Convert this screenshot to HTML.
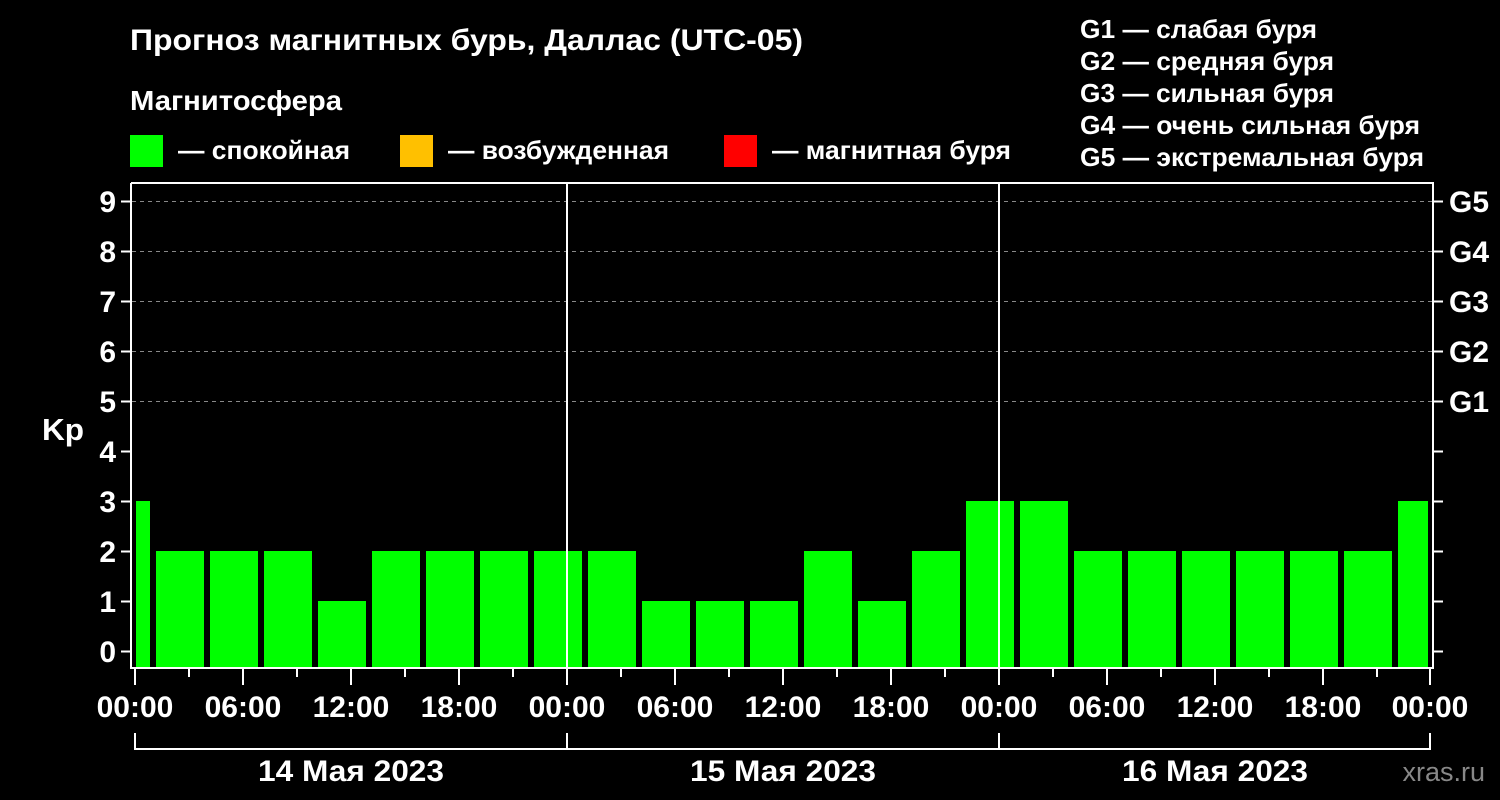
<!DOCTYPE html>
<html><head><meta charset="utf-8"><style>
html,body{margin:0;padding:0;background:#000;}
svg{display:block;font-family:"Liberation Sans",Arial,sans-serif;font-weight:bold;}
</style></head><body>
<svg width="1500" height="800" viewBox="0 0 1500 800" xmlns="http://www.w3.org/2000/svg">
<rect width="1500" height="800" fill="#000"/>
<g fill="#fff">
<text x="130" y="50" font-size="30" textLength="673" lengthAdjust="spacingAndGlyphs">Прогноз магнитных бурь, Даллас (UTC-05)</text>
<text x="130" y="110" font-size="28" textLength="212" lengthAdjust="spacingAndGlyphs">Магнитосфера</text>
<text x="178" y="159" font-size="26" textLength="172" lengthAdjust="spacingAndGlyphs">— спокойная</text>
<text x="448" y="159" font-size="26" textLength="221" lengthAdjust="spacingAndGlyphs">— возбужденная</text>
<text x="772" y="159" font-size="26" textLength="239" lengthAdjust="spacingAndGlyphs">— магнитная буря</text>
<g font-size="26">
<text x="1080" y="38" textLength="237" lengthAdjust="spacingAndGlyphs">G1 — слабая буря</text>
<text x="1080" y="70" textLength="254" lengthAdjust="spacingAndGlyphs">G2 — средняя буря</text>
<text x="1080" y="102" textLength="254" lengthAdjust="spacingAndGlyphs">G3 — сильная буря</text>
<text x="1080" y="134" textLength="340" lengthAdjust="spacingAndGlyphs">G4 — очень сильная буря</text>
<text x="1080" y="166" textLength="344" lengthAdjust="spacingAndGlyphs">G5 — экстремальная буря</text>
</g>
</g>
<rect x="130" y="135" width="33" height="32" fill="#00ff00"/>
<rect x="400" y="135" width="33" height="32" fill="#ffc000"/>
<rect x="724" y="135" width="33" height="32" fill="#ff0000"/>

<g stroke="#888" stroke-width="1" stroke-dasharray="4,4">
<line x1="132" y1="201.5" x2="1433" y2="201.5"/>
<line x1="132" y1="251.5" x2="1433" y2="251.5"/>
<line x1="132" y1="301.5" x2="1433" y2="301.5"/>
<line x1="132" y1="351.5" x2="1433" y2="351.5"/>
<line x1="132" y1="401.5" x2="1433" y2="401.5"/>
</g>

<g fill="#00ff00">
<rect x="136" y="501" width="14" height="167"/>
<rect x="156" y="551" width="48" height="117"/>
<rect x="210" y="551" width="48" height="117"/>
<rect x="264" y="551" width="48" height="117"/>
<rect x="318" y="601" width="48" height="67"/>
<rect x="372" y="551" width="48" height="117"/>
<rect x="426" y="551" width="48" height="117"/>
<rect x="480" y="551" width="48" height="117"/>
<rect x="534" y="551" width="48" height="117"/>
<rect x="588" y="551" width="48" height="117"/>
<rect x="642" y="601" width="48" height="67"/>
<rect x="696" y="601" width="48" height="67"/>
<rect x="750" y="601" width="48" height="67"/>
<rect x="804" y="551" width="48" height="117"/>
<rect x="858" y="601" width="48" height="67"/>
<rect x="912" y="551" width="48" height="117"/>
<rect x="966" y="501" width="48" height="167"/>
<rect x="1020" y="501" width="48" height="167"/>
<rect x="1074" y="551" width="48" height="117"/>
<rect x="1128" y="551" width="48" height="117"/>
<rect x="1182" y="551" width="48" height="117"/>
<rect x="1236" y="551" width="48" height="117"/>
<rect x="1290" y="551" width="48" height="117"/>
<rect x="1344" y="551" width="48" height="117"/>
<rect x="1398" y="501" width="30" height="167"/>
</g>

<g stroke="#fff" stroke-width="2" fill="none">
<polyline points="131,183 131,668 1433,668 1433,183 131,183"/>
<line x1="567" y1="183" x2="567" y2="668"/>
<line x1="999" y1="183" x2="999" y2="668"/>
<path d="M121 201.5H131M121 251.5H131M121 301.5H131M121 351.5H131M121 401.5H131M121 451.5H131M121 501.5H131M121 551.5H131M121 601.5H131M121 651.5H131"/>
<path d="M1433 201.5H1443M1433 251.5H1443M1433 301.5H1443M1433 351.5H1443M1433 401.5H1443M1433 451.5H1443M1433 501.5H1443M1433 551.5H1443M1433 601.5H1443M1433 651.5H1443"/>
<path d="M135 668V685M243 668V685M351 668V685M459 668V685M567 668V685M675 668V685M783 668V685M891 668V685M999 668V685M1107 668V685M1215 668V685M1323 668V685M1430 668V685"/>
<path d="M189 668V677M297 668V677M405 668V677M513 668V677M621 668V677M729 668V677M837 668V677M945 668V677M1053 668V677M1161 668V677M1269 668V677M1377 668V677"/>
<path d="M135 733V749H1430V733M567 733V749M999 733V749"/>
</g>

<g fill="#fff" font-size="30" text-anchor="end">
<text x="116" y="212">9</text><text x="116" y="262">8</text><text x="116" y="312">7</text>
<text x="116" y="362">6</text><text x="116" y="412">5</text><text x="116" y="462">4</text>
<text x="116" y="512">3</text><text x="116" y="562">2</text><text x="116" y="612">1</text>
<text x="116" y="662">0</text>
</g>
<text x="42" y="440" fill="#fff" font-size="31" textLength="42" lengthAdjust="spacingAndGlyphs">Kp</text>
<g fill="#fff" font-size="30">
<text x="1449" y="212">G5</text><text x="1449" y="262">G4</text><text x="1449" y="312">G3</text>
<text x="1449" y="362">G2</text><text x="1449" y="412">G1</text>
</g>
<g fill="#fff" font-size="30" text-anchor="middle">
<text x="135" y="717">00:00</text><text x="243" y="717">06:00</text><text x="351" y="717">12:00</text>
<text x="459" y="717">18:00</text><text x="567" y="717">00:00</text><text x="675" y="717">06:00</text>
<text x="783" y="717">12:00</text><text x="891" y="717">18:00</text><text x="999" y="717">00:00</text>
<text x="1107" y="717">06:00</text><text x="1215" y="717">12:00</text><text x="1323" y="717">18:00</text>
<text x="1430" y="717">00:00</text>
<text x="351" y="781" textLength="186" lengthAdjust="spacingAndGlyphs">14 Мая 2023</text>
<text x="783" y="781" textLength="186" lengthAdjust="spacingAndGlyphs">15 Мая 2023</text>
<text x="1215" y="781" textLength="186" lengthAdjust="spacingAndGlyphs">16 Мая 2023</text>
</g>
<text x="1485" y="781" fill="#888" font-size="27" text-anchor="end" font-weight="normal">xras.ru</text>
</svg>
</body></html>
